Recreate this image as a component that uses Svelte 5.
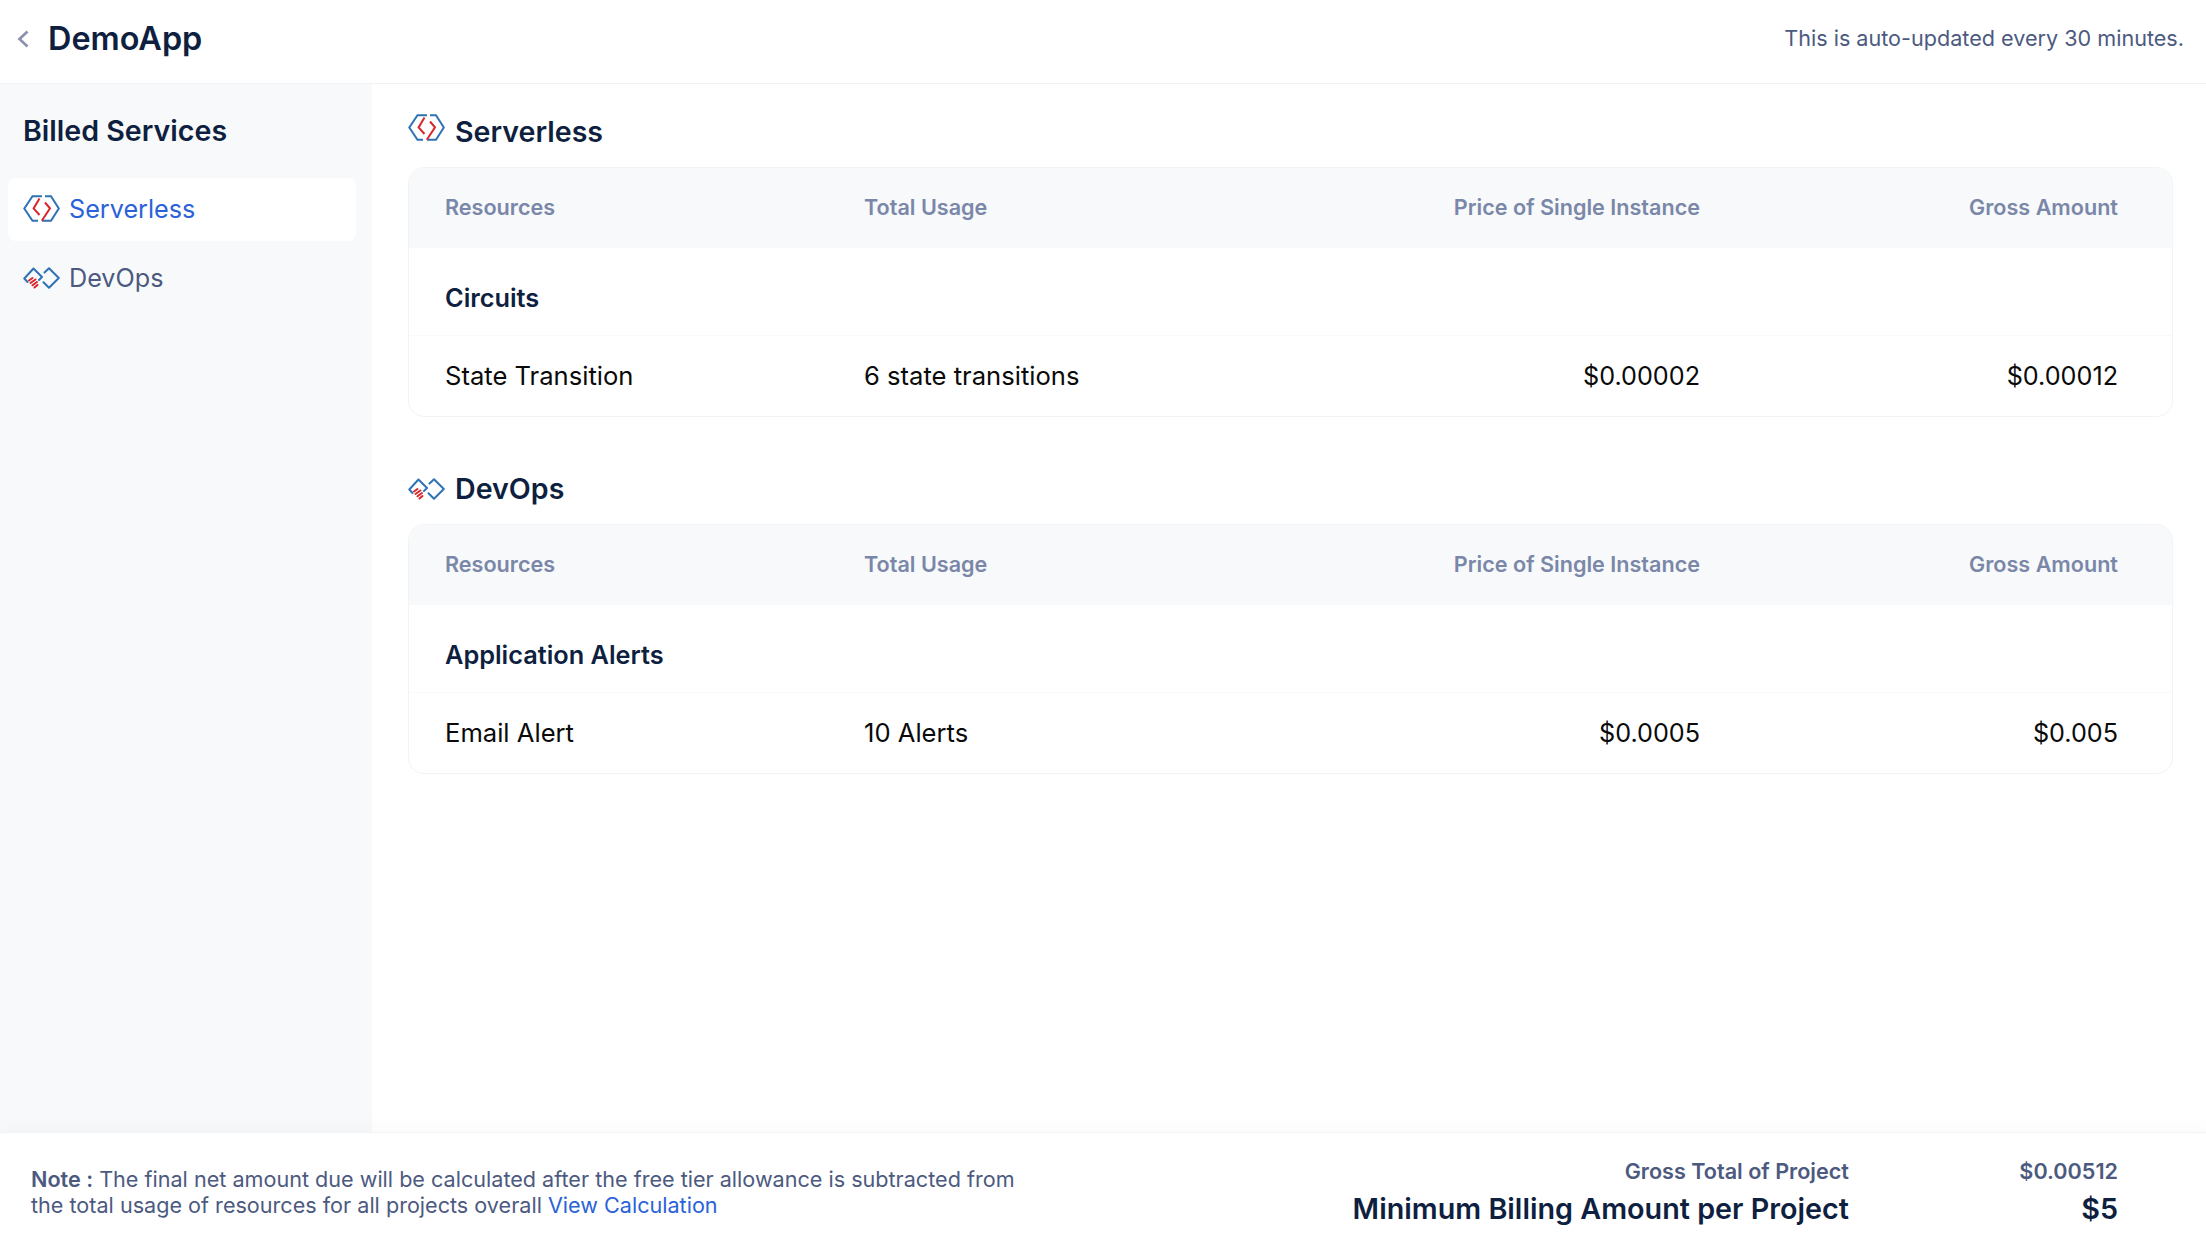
<script>
  const sections = [
    { name: 'Serverless', icon: 'hex', group: 'Circuits', resource: 'State Transition', usage: '6 state transitions', price: '$0.00002', gross: '$0.00012' },
    { name: 'DevOps', icon: 'dia', group: 'Application Alerts', resource: 'Email Alert', usage: '10 Alerts', price: '$0.0005', gross: '$0.005' }
  ];
</script>

{#snippet icon(kind)}
  {#if kind === 'hex'}
    <svg class="ico" width="37" height="27" viewBox="0 0 37 27" fill="none" stroke-width="2">
      <path d="M19 1.2H9.5L1.3 13.5L9.5 25.8H15" stroke="#2f73b4" />
      <path d="M22 1.2H28L35.8 13.5L28 25.8H19" stroke="#2f73b4" />
      <path d="M16.5 3.5L10.6 13.4L16.5 20" stroke="#d9262c" />
      <path d="M22 7.5L27 13.4L18.8 25.8" stroke="#d9262c" />
    </svg>
  {:else}
    <svg class="ico" width="37" height="22" viewBox="0 0 37 22" fill="none" stroke-width="2" stroke-linejoin="round" stroke-linecap="round">
      <path d="M4.5 15L1.3 11.5L10.5 1.5L19 10L16 13" stroke="#2f73b4" />
      <path d="M21.5 5.5L26 1.2L35.8 11L26 20.8L20.5 15.2" stroke="#2f73b4" />
      <path d="M6 13.5L9.5 11M7.5 16L12.5 12.5M9.5 18.3L14 15M11.5 20.5L14.5 18" stroke="#d9262c" />
    </svg>
  {/if}
{/snippet}

<div class="app">
  <header class="top">
    <div class="brand">
      <svg class="back" width="12" height="18" viewBox="0 0 12 18" fill="none">
        <path d="M10.5 1.5L2.5 9L10.5 16.5" stroke="#8a90ab" stroke-width="2.6" />
      </svg>
      <h1>DemoApp</h1>
    </div>
    <p class="updated">This is auto-updated every 30 minutes.</p>
  </header>

  <div class="body">
    <aside class="side">
      <h2>Billed Services</h2>
      <nav>
        {#each sections as s, i}
          <div class="item" class:active={i === 0}>
            {@render icon(s.icon)}
            <span>{s.name}</span>
          </div>
        {/each}
      </nav>
    </aside>

    <main class="content">
      {#each sections as s}
        <section>
          <div class="sec-title">
            <span class="sec-ico" class:raised={s.icon === 'hex'}>{@render icon(s.icon)}</span>
            <h3>{s.name}</h3>
          </div>
          <div class="card">
            <div class="grid head">
              <div>Resources</div>
              <div>Total Usage</div>
              <div class="r">Price of Single Instance</div>
              <div class="r">Gross Amount</div>
            </div>
            <div class="group">{s.group}</div>
            <div class="grid row">
              <div>{s.resource}</div>
              <div>{s.usage}</div>
              <div class="r num">{s.price}</div>
              <div class="r num">{s.gross}</div>
            </div>
          </div>
        </section>
      {/each}
    </main>
  </div>

  <footer class="foot">
    <p class="note"><b>Note :</b> The final net amount due will be calculated after the free tier allowance is subtracted from<br />the total usage of resources for all projects overall <a href="#calc">View Calculation</a></p>
    <div class="totals">
      <div class="t1"><span>Gross Total of Project</span><span class="val">$0.00512</span></div>
      <div class="t2"><span>Minimum Billing Amount per Project</span><span class="val">$5</span></div>
    </div>
  </footer>
</div>

<style>
  :global(body) { margin: 0; background: #fff; }
  .app {
    width: 2206px; height: 1248px; display: flex; flex-direction: column; overflow: hidden;
    font-family: Inter, "Liberation Sans", sans-serif; color: #0f1f40; background: #fff;
  }
  .top {
    height: 84px; box-sizing: border-box; flex: none; display: flex; align-items: center; justify-content: space-between;
    padding: 0 22px 6px 17px; border-bottom: 1px solid #f2f3f6;
  }
  .brand { display: flex; align-items: center; gap: 19px; }
  h1 { margin: 0; font-size: 32.4px; font-weight: 600; color: #0f1f40; }
  .updated { margin: 0 0 2px; font-size: 21.6px; color: #4c5a80; }
  .body { flex: 1; display: flex; min-height: 0; }
  .side { width: 372px; flex: none; background: #f8f9fb; padding-top: 27px; box-sizing: border-box; }
  h2 { margin: 0 0 27px 23px; font-size: 28.6px; line-height: 40px; font-weight: 600; color: #0f1f40; }
  nav { display: flex; flex-direction: column; gap: 6px; padding: 0 16px 0 8px; }
  .item {
    height: 63px; box-sizing: border-box; display: flex; align-items: center; gap: 9px; padding: 0 0 2px 15px; border-radius: 8px;
    font-size: 25.2px; color: #4c5a80;
  }
  .item.active { background: #fff; color: #2b62d9; }
  .ico { display: block; flex: none; }
  .content { flex: 1; padding: 19px 33px 0 36px; min-width: 0; }
  section + section { margin-top: 43px; }
  .sec-title { height: 64px; box-sizing: border-box; display: flex; align-items: center; gap: 10px; padding-bottom: 7px; }
  .sec-ico { display: block; }
  .sec-ico.raised { margin-top: -8px; }
  h3 { margin: 0; font-size: 28.6px; font-weight: 600; color: #0f1f40; }
  .card { border: 1px solid #f2f3f6; border-radius: 16px; overflow: hidden; background: #fff; }
  .grid { display: grid; grid-template-columns: 419px 419px 417px 418px; padding-left: 36px; }
  .r { text-align: right; }
  .head { height: 80px; box-sizing: border-box; padding-bottom: 2px; align-items: center; background: #f7f9fb; font-size: 21.6px; font-weight: 600; color: #7a87a8; }
  .group { height: 87px; display: flex; align-items: center; padding-left: 36px; padding-top: 12px; box-sizing: border-box; font-size: 25.3px; font-weight: 600; color: #0f1f40; }
  .row { height: 81px; padding-bottom: 1px; align-items: center; border-top: 1px solid #fafafb; box-sizing: border-box; font-size: 25.6px; color: #0a0a0a; }
  .num { font-size: 25.2px; }
  .foot {
    height: 116px; flex: none; box-sizing: border-box; display: flex; justify-content: space-between; align-items: flex-start;
    padding: 0 88px 0 31px; background: #fff; box-shadow: 0 -6px 16px rgba(20, 30, 60, 0.025); position: relative;
    border-top: 1px solid #f3f4f6;
  }
  .note { margin: 33px 0 0; font-size: 21.6px; line-height: 26px; color: #4c5a80; }
  .note b { font-weight: 600; }
  .note a { color: #2b62d9; text-decoration: none; }
  .totals { padding-top: 24px; }
  .t1, .t2 { display: flex; justify-content: flex-end; }
  .t1 { font-size: 21.6px; line-height: 28px; font-weight: 600; color: #4c5a80; }
  .t2 { font-size: 28.75px; line-height: 44px; font-weight: 600; color: #0f1f40; margin-top: 2px; }
  .val { width: 269px; text-align: right; }
</style>
